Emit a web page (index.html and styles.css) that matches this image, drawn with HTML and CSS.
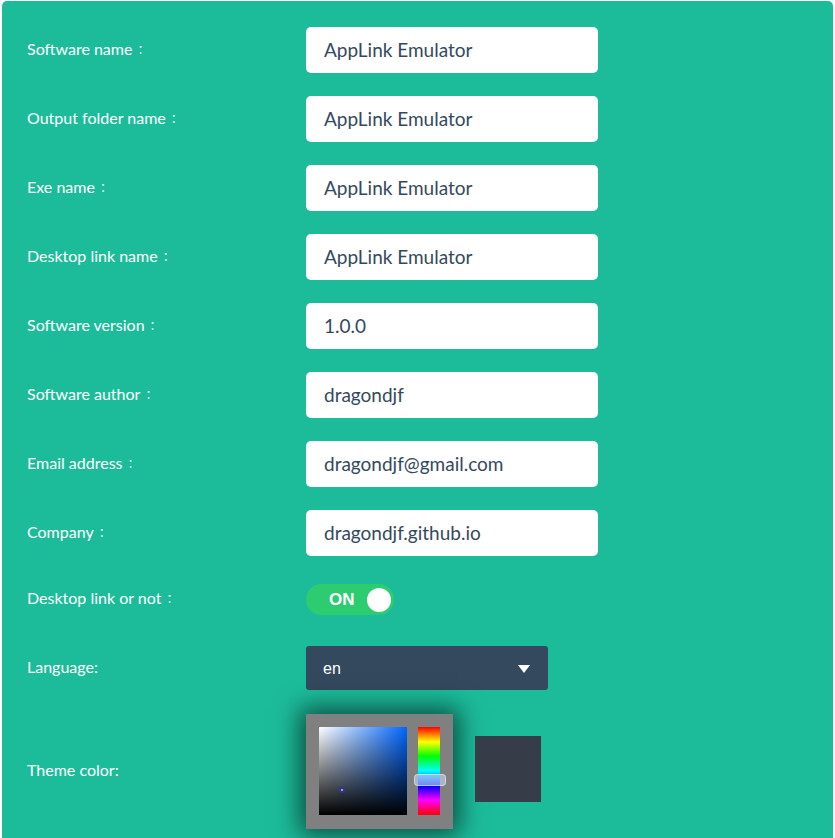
FILE: index.html
```html
<!DOCTYPE html>
<html>
<head>
<meta charset="utf-8">
<link rel="stylesheet" href="styles.css">
</head>
<body>
<div class="panel">
  <div class="row"><label class="lbl">Software name<span class="colon">：</span></label><div class="field">AppLink Emulator</div></div>
  <div class="row"><label class="lbl">Output folder name<span class="colon">：</span></label><div class="field">AppLink Emulator</div></div>
  <div class="row"><label class="lbl">Exe name<span class="colon">：</span></label><div class="field">AppLink Emulator</div></div>
  <div class="row"><label class="lbl">Desktop link name<span class="colon">：</span></label><div class="field">AppLink Emulator</div></div>
  <div class="row"><label class="lbl">Software version<span class="colon">：</span></label><div class="field">1.0.0</div></div>
  <div class="row"><label class="lbl">Software author<span class="colon">：</span></label><div class="field">dragondjf</div></div>
  <div class="row"><label class="lbl">Email address<span class="colon">：</span></label><div class="field">dragondjf@gmail.com</div></div>
  <div class="row"><label class="lbl">Company<span class="colon">：</span></label><div class="field">dragondjf.github.io</div></div>
  <div class="row row-toggle"><label class="lbl">Desktop link or not<span class="colon">：</span></label>
    <div class="toggle"><span class="toggle-text">ON</span><span class="knob"></span></div>
  </div>
  <div class="row row-lang"><label class="lbl">Language:</label>
    <div class="select"><span>en</span><span class="caret"></span></div>
  </div>
  <div class="row row-color"><label class="lbl lbl-color">Theme color:</label>
    <div class="picker">
      <div class="sv"><span class="marker"></span></div>
      <div class="hue"><span class="handle"></span></div>
    </div>
    <div class="swatch"></div>
  </div>
</div>
</body>
</html>
```

FILE: styles.css
```css
html, body {
  margin: 0;
  padding: 0;
  background: #ffffff;
}
body {
  padding: 1px 2px 0 2px;
  font-family: Lato, "Noto Sans CJK TC", sans-serif;
}
.panel {
  background: #1cbc9b;
  border-radius: 5px;
  padding: 26px 25px 30px 25px;
  display: flex;
  flex-direction: column;
  gap: 23px;
}
.row {
  display: flex;
  align-items: center;
  height: 46px;
}
.lbl {
  width: 279px;
  flex: none;
  color: #ffffff;
  font-size: 16px;
  line-height: 20px;
  height: 20px;
  margin-top: -3px;
}
.colon {
  font-family: "Noto Sans CJK TC", sans-serif;
  font-size: 12px;
  line-height: 12px;
  margin-left: 2px;
}
.field {
  width: 292px;
  height: 46px;
  box-sizing: border-box;
  background: #ffffff;
  border-radius: 5px;
  padding: 0 0 1px 18px;
  display: flex;
  align-items: center;
  color: #34495e;
  font-size: 19px;
}
.row-toggle {
  height: 41px;
}
.toggle {
  width: 88px;
  height: 31px;
  border-radius: 16px;
  background: #2ecc71;
  display: flex;
  align-items: center;
  box-sizing: border-box;
  padding: 0 3px 0 23px;
}
.toggle-text {
  color: #ffffff;
  font-weight: bold;
  font-size: 17px;
  font-family: "Liberation Sans", Arial, sans-serif;
}
.knob {
  width: 24px;
  height: 24px;
  border-radius: 50%;
  background: #ffffff;
  margin-left: auto;
}
.row-lang {
  height: 48px;
  padding-top: 2px;
  box-sizing: border-box;
}
.select {
  width: 242px;
  height: 44px;
  box-sizing: border-box;
  background: #34495e;
  border-radius: 3px;
  display: flex;
  align-items: center;
  padding: 2px 18px 0 17px;
  color: #ffffff;
  font-size: 16px;
  font-family: "Liberation Sans", Arial, sans-serif;
}
.caret {
  margin-left: auto;
  width: 0;
  height: 0;
  border-left: 6px solid transparent;
  border-right: 6px solid transparent;
  border-top: 8px solid #ffffff;
}
.row-color {
  height: 115px;
  align-items: flex-start;
}
.lbl-color {
  margin-top: 46px;
}
.picker {
  width: 147px;
  height: 115px;
  box-sizing: border-box;
  background: #808080;
  padding: 13px;
  display: flex;
  gap: 11px;
  box-shadow: 0 0 24px 6px rgba(0, 0, 0, 0.6);
}
.sv {
  position: relative;
  width: 88px;
  height: 88px;
  background:
    linear-gradient(to bottom, rgba(0,0,0,0), #000000),
    linear-gradient(to right, #ffffff, #0066ff);
}
.marker {
  position: absolute;
  left: 20px;
  top: 60px;
  width: 2px;
  height: 2px;
  border-radius: 50%;
  border: 2px solid #33338f;
  background: #c8c8f0;
}
.hue {
  position: relative;
  width: 22px;
  height: 88px;
  background: linear-gradient(to bottom, #ff0000 0%, #ffff00 17%, #00ff00 33%, #00ffff 50%, #0000ff 67%, #ff00ff 83%, #ff0000 100%);
}
.handle {
  position: absolute;
  left: -4px;
  top: 47px;
  width: 30px;
  height: 10px;
  border-radius: 4px;
  background: rgba(200, 215, 240, 0.6);
  border: 1px solid rgba(220, 230, 240, 0.7);
}
.swatch {
  width: 66px;
  height: 66px;
  background: #363c48;
  margin-left: 22px;
  margin-top: 22px;
}
```
